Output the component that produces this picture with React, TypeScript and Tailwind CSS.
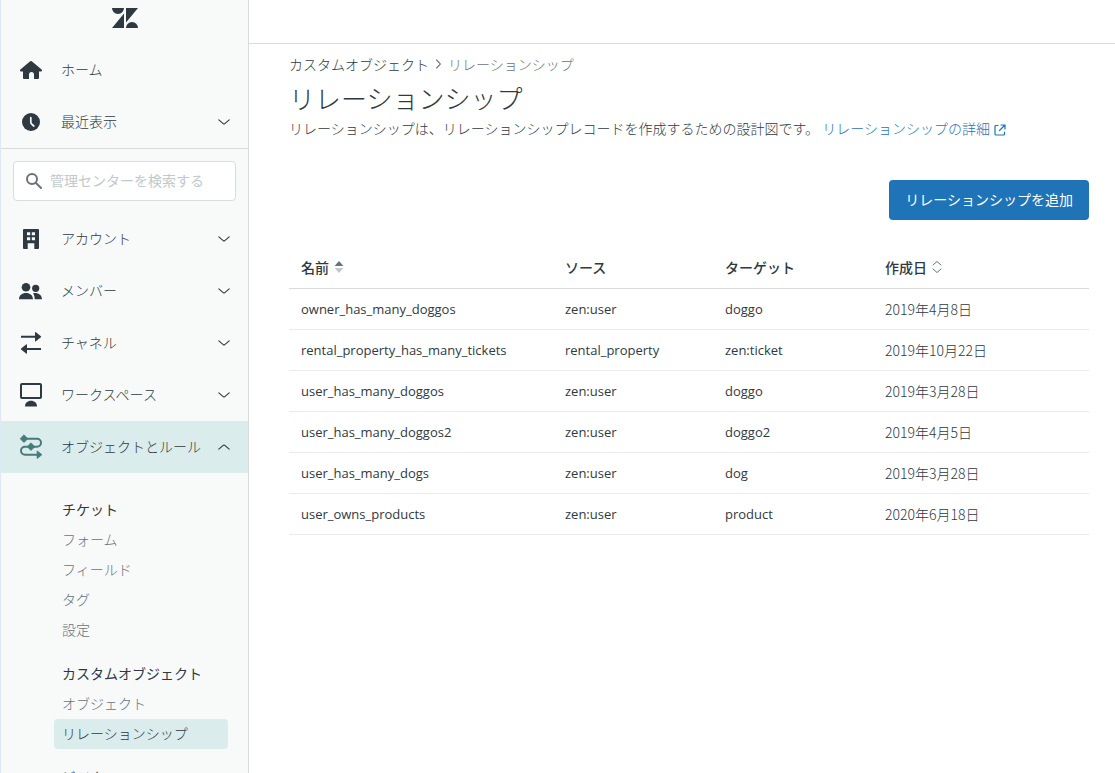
import { useState } from 'react';

const navItems = [
  { id: 'account', name: 'アカウント' },
  { id: 'members', name: 'メンバー' },
  { id: 'channels', name: 'チャネル' },
  { id: 'workspaces', name: 'ワークスペース' },
  { id: 'objects', name: 'オブジェクトとルール' },
];

const subMenu = [
  { title: 'チケット', links: ['フォーム', 'フィールド', 'タグ', '設定'] },
  { title: 'カスタムオブジェクト', links: ['オブジェクト', 'リレーションシップ'] },
  { title: 'ビジネスルール', links: [] },
];

const relationships = [
  { name: 'owner_has_many_doggos', source: 'zen:user', target: 'doggo', created: '2019年4月8日' },
  { name: 'rental_property_has_many_tickets', source: 'rental_property', target: 'zen:ticket', created: '2019年10月22日' },
  { name: 'user_has_many_doggos', source: 'zen:user', target: 'doggo', created: '2019年3月28日' },
  { name: 'user_has_many_doggos2', source: 'zen:user', target: 'doggo2', created: '2019年4月5日' },
  { name: 'user_has_many_dogs', source: 'zen:user', target: 'dog', created: '2019年3月28日' },
  { name: 'user_owns_products', source: 'zen:user', target: 'product', created: '2020年6月18日' },
];

function Logo() {
  return (
    <svg width="26" height="20" viewBox="0 0 26 20" fill="#2f3941" aria-hidden="true">
      <path d="M0 0h12a6 6 0 0 1-12 0zM12 5.500V20H0zM14 0h12L14 14.500zM14 20a6 6 0 0 1 12 0z" />
    </svg>
  );
}

function NavIcon({ id }: { id: string }) {
  return (
    <svg width="26" height="26" viewBox="0 0 26 26" fill="currentColor" className="shrink-0" aria-hidden="true">
      {id === 'home' && (
        <path d="M12.2 4.3a1.2 1.2 0 0 1 1.6 0l9.8 8.2c.9.8.4 1.9-.6 1.9h-2v6.6a1 1 0 0 1-1 1h-4v-4.5a2.5 2.5 0 0 0-5 0V22H6a1 1 0 0 1-1-1v-6.6H3c-1 0-1.5-1.1-.6-1.9z" />
      )}
      {id === 'recent' && (
        <>
          <circle cx="13" cy="13" r="9" />
          <path d="M12.8 8.5v4.8q0 1 .7 1.7l2.3 2" fill="none" stroke="#f8f9f9" strokeWidth="1.7" strokeLinecap="round" />
        </>
      )}
      {id === 'account' && (
        <path
          fillRule="evenodd"
          d="M6 3h14a1 1 0 0 1 1 1v18a1 1 0 0 1-1 1h-3.700v-5.700H9.700V23H6a1 1 0 0 1-1-1V4a1 1 0 0 1 1-1zM9 6.300v3h3.200v-3zM13.800 6.300v3H17v-3zM9 11.200v3h3.200v-3zM13.800 11.200v3H17v-3z"
        />
      )}
      {id === 'members' && (
        <>
          <circle cx="8" cy="9.3" r="4.3" />
          <circle cx="17.7" cy="10.3" r="3.6" />
          <path d="M1 21.300c0-4 3-6.300 7-6.300s7 2.300 7 6.300zM15 15.200c4.600-1 9 1.400 9 6.100h-7.300c-.1-2.500-.5-4.500-1.700-6.100z" />
        </>
      )}
      {id === 'channels' && (
        <path d="M3 5.700h14V2.500q.2-.8.9-.3l5 4q.5.5 0 1l-5 4q-.7.5-.9-.3V7.700H3zM23 18v2H9v3.200q-.2.8-.9.3l-5-4q-.5-.5 0-1l5-4q.7-.5.9.3V18z" />
      )}
      {id === 'workspaces' && (
        <>
          <rect x="3" y="2" width="20" height="14" rx="1" fill="none" stroke="currentColor" strokeWidth="2" />
          <path d="M7 24.500c0-3.500 2.600-5.700 6-5.700s6 2.200 6 5.700z" />
        </>
      )}
      {id === 'objects' && (
        <>
          <path d="M6 4.700h13a4 4 0 0 1 0 8H7a4 4 0 0 0 0 8h13" fill="none" stroke="currentColor" strokeWidth="2" />
          <path d="M6 .8l3.900 3.900L6 8.600 2.100 4.700zM13 8.800l3.900 3.900-3.900 3.900-3.900-3.900z" stroke="currentColor" strokeWidth=".6" strokeLinejoin="round" />
          <path d="M19.200 17l4.600 3.700-4.600 3.700z" stroke="currentColor" strokeWidth="1" strokeLinejoin="round" />
        </>
      )}
    </svg>
  );
}

function Chevron({ up = false }: { up?: boolean }) {
  return (
    <svg width="12" height="6" viewBox="0 0 12 6" fill="none" stroke="#2f3941" strokeWidth="1.1" strokeLinecap="round" aria-hidden="true">
      {up ? <path d="M.8 5.200l4.700-4q.5-.4 1 0l4.700 4" /> : <path d="M.8.8l4.700 4q.5.4 1 0l4.700-4" />}
    </svg>
  );
}

function Sidebar() {
  const [open, setOpen] = useState('objects');
  const [search, setSearch] = useState('');

  return (
    <aside className="flex w-[249px] shrink-0 flex-col overflow-hidden border-l border-r border-l-[#dfe8f5] border-r-[#d8dcde] bg-[#f8f9f9]">
      <div className="flex h-11 shrink-0 justify-center pt-2">
        <Logo />
      </div>

      <div className="shrink-0 border-b border-[#d8dcde]">
        <a href="#home" className="flex h-[52px] items-center gap-[17px] pl-[17px] pr-[18px]">
          <NavIcon id="home" />
          <span className="pb-0.5">ホーム</span>
        </a>
        <button type="button" className="flex h-[52px] w-full items-center gap-[17px] pl-[17px] pr-[18px] text-left">
          <NavIcon id="recent" />
          <span className="flex-1 pb-0.5">最近表示</span>
          <Chevron />
        </button>
      </div>

      <div className="shrink-0 p-3">
        <label className="flex h-10 items-center gap-2 rounded border border-[#d8dcde] bg-white px-3">
          <svg width="16" height="16" viewBox="0 0 16 16" fill="none" stroke="#68737d" strokeWidth="2" strokeLinecap="round" className="shrink-0" aria-hidden="true">
            <circle cx="6" cy="6" r="5" />
            <path d="M10 10l5 5" />
          </svg>
          <input
            type="text"
            aria-label="管理センターを検索する"
            placeholder="管理センターを検索する"
            value={search}
            onChange={(e) => setSearch(e.target.value)}
            className="w-full min-w-0 bg-transparent pb-0.5 font-normal outline-none placeholder:text-[#c2c8cc]"
          />
        </label>
      </div>

      <nav className="shrink-0">
        {navItems.map((item) => (
          <button
            key={item.id}
            type="button"
            aria-expanded={open === item.id}
            onClick={() => setOpen(open === item.id ? '' : item.id)}
            className={`flex h-[52px] w-full items-center gap-[17px] pl-[17px] pr-[18px] text-left ${open === item.id ? 'bg-[#daeceb]' : ''}`}
          >
            <span className={open === item.id ? 'text-[#467b7c]' : ''}>
              <NavIcon id={item.id} />
            </span>
            <span className="flex-1 whitespace-nowrap pb-0.5">{item.name}</span>
            <Chevron up={open === item.id} />
          </button>
        ))}

        {open === 'objects' && (
          <div className="flex flex-col gap-[14px] pl-[53px] pr-5 pt-[22px]">
            {subMenu.map((group) => (
              <div key={group.title}>
                <h2 className="px-2 pb-0.5 font-normal leading-7">{group.title}</h2>
                {group.links.map((link) => (
                  <a
                    key={link}
                    href="#"
                    className={`block rounded px-2 pb-0.5 leading-7 ${link === 'リレーションシップ' ? 'bg-[#daeceb]' : 'text-[#68737d]'}`}
                  >
                    {link}
                  </a>
                ))}
              </div>
            ))}
          </div>
        )}
      </nav>
    </aside>
  );
}

export default function App() {
  return (
    <div className="flex h-screen bg-white font-['Noto_Sans_CJK_JP',sans-serif] text-sm font-light text-[#2f3941]">
      <Sidebar />

      <div className="min-w-0 flex-1">
        <header className="h-11 border-b border-[#d8dcde]" />

        <main className="pl-10 pr-[26px] pt-[10px]">
          <div className="flex items-center gap-[7px] leading-5">
            <a href="#">カスタムオブジェクト</a>
            <svg width="5" height="10" viewBox="0 0 5 10" fill="none" stroke="#68737d" strokeWidth="1.1" strokeLinecap="round" aria-hidden="true">
              <path d="M.6 1l3.500 3.500q.4.500 0 1L.6 9" />
            </svg>
            <span className="text-[#68737d]">リレーションシップ</span>
          </div>
          <h1 className="mt-1 text-[26px] leading-10">リレーションシップ</h1>
          <p className="leading-5">
            リレーションシップは、リレーションシップレコードを作成するための設計図です。{' '}
            <a href="#" className="text-[#1f73b7]">
              リレーションシップの詳細
              <svg width="12" height="12" viewBox="0 0 12 12" fill="none" stroke="currentColor" strokeWidth="1.2" strokeLinecap="round" strokeLinejoin="round" className="ml-1 inline-block" aria-hidden="true">
                <path d="M4 1.500H2a1 1 0 0 0-1 1V10a1 1 0 0 0 1 1h7.500a1 1 0 0 0 1-1V8M7 1h4v4M11 1L5.500 6.500" />
              </svg>
            </a>
          </p>

          <div className="mt-[42px] flex justify-end">
            <button type="button" className="h-10 rounded bg-[#1f73b7] px-4 pb-0.5 font-normal text-white hover:bg-[#144a75]">
              リレーションシップを追加
            </button>
          </div>

          <table className="mt-[27px] w-full table-fixed text-left">
            <thead>
              <tr className="h-[41px] border-b border-[#d8dcde] [&>th]:px-3 [&>th]:font-medium">
                <th className="w-[33%]">
                  <button type="button" className="flex items-center gap-[5px]">
                    名前
                    <svg width="10" height="12" viewBox="0 0 10 12" aria-hidden="true">
                      <path d="M.6 5L4.500.4q.5-.5 1 0L9.400 5z" fill="#68737d" />
                      <path d="M.6 7l3.900 4.600q.5.500 1 0L9.400 7z" fill="#c2c8cc" />
                    </svg>
                  </button>
                </th>
                <th className="w-[20%]">ソース</th>
                <th className="w-[20%]">ターゲット</th>
                <th className="w-[27%]">
                  <button type="button" className="flex items-center gap-[5px]">
                    作成日
                    <svg width="10" height="12" viewBox="0 0 10 12" fill="none" stroke="#68737d" strokeLinecap="round" strokeLinejoin="round" aria-hidden="true">
                      <path d="M1 4l4-3.500L9 4M1 8l4 3.500L9 8" />
                    </svg>
                  </button>
                </th>
              </tr>
            </thead>
            <tbody>
              {relationships.map((row) => (
                <tr key={row.name} className="h-[41px] border-b border-[#e9ebed] font-['Open_Sans','Noto_Sans_CJK_JP',sans-serif] text-[13px] font-normal [&>td]:px-3">
                  <td className="pt-0.5">{row.name}</td>
                  <td className="pt-0.5">{row.source}</td>
                  <td className="pt-0.5">{row.target}</td>
                  <td className="font-['Noto_Sans_CJK_JP',sans-serif] text-sm font-light">{row.created}</td>
                </tr>
              ))}
            </tbody>
          </table>
        </main>
      </div>
    </div>
  );
}
